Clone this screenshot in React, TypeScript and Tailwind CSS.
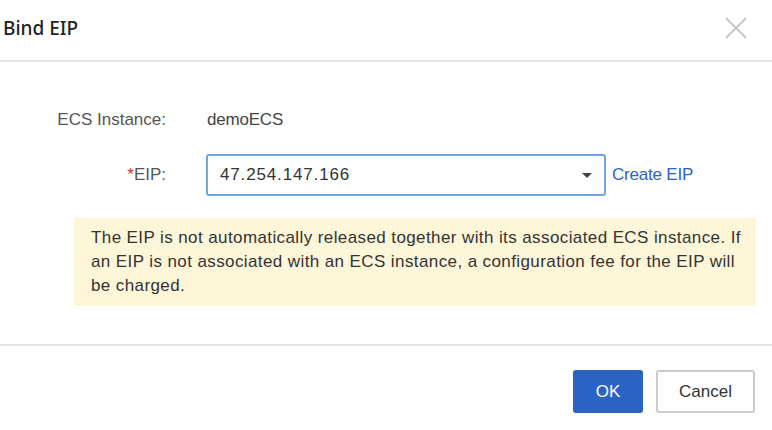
import React from 'react';

function CloseIcon() {
  return (
    <svg width="22" height="22" viewBox="0 0 22 22" fill="none" stroke="#c8c8c8" strokeWidth="2">
      <path d="M1 1 L21 21 M21 1 L1 21" />
    </svg>
  );
}

export default function App() {
  return (
    <div className="w-[772px] h-[430px] bg-white flex flex-col font-['Liberation_Sans',Arial,sans-serif] overflow-hidden">
      {/* header */}
      <div className="h-[62px] shrink-0 flex items-center justify-between pl-[3px] pr-[25px] border-b-2 border-[#e6e6e6]">
        <div className="text-[19px] font-medium text-[#222] font-['Noto_Sans',sans-serif] pb-[4px]">Bind EIP</div>
        <div className="pb-[5px]">
          <CloseIcon />
        </div>
      </div>

      {/* body */}
      <div className="h-[282px] shrink-0 pt-[46px] pl-[57px] pr-[16px]">
        <div className="flex items-center h-[24px]">
          <div className="w-[109px] text-right text-[17px] text-[#555] whitespace-nowrap">ECS Instance:</div>
          <div className="ml-[41px] text-[17px] tracking-[-0.2px] text-[#444]">demoECS</div>
        </div>

        <div className="flex items-center mt-[22px] h-[42px]">
          <div className="w-[109px] text-right text-[17px] text-[#555]">
            <span className="text-[#d93026]">*</span>EIP:
          </div>
          <div className="ml-[40px] w-[400px] h-[42px] border-2 border-[#6ea5e3] rounded-[3px] flex items-center justify-between pl-[12px] pr-[12px]">
            <span className="text-[17px] text-[#333] tracking-[0.85px]">47.254.147.166</span>
            <span className="w-0 h-0 border-l-[5px] border-r-[5px] border-t-[5px] border-l-transparent border-r-transparent border-t-[#444]" />
          </div>
          <a className="ml-[6px] text-[17px] tracking-[-0.2px] text-[#2d62c2] cursor-pointer">Create EIP</a>
        </div>

        <div className="mt-[22px] ml-[17px] w-[682px] h-[88px] bg-[#fdf6d8] pl-[17px] pt-[8px] text-[17px] tracking-[0.4px] leading-[24px] text-[#333] whitespace-nowrap">
          The EIP is not automatically released together with its associated ECS instance. If
          <br />
          an EIP is not associated with an ECS instance, a configuration fee for the EIP will
          <br />
          be charged.
        </div>
      </div>

      {/* footer */}
      <div className="flex-1 border-t-2 border-[#e6e6e6] flex justify-end items-start pt-[24px] pr-[17px] gap-[13px]">
        <button className="w-[70px] h-[43px] rounded-[3px] bg-[#2b62c3] text-white text-[17px]">OK</button>
        <button className="w-[99px] h-[43px] rounded-[3px] border-2 border-[#c9cbce] bg-white text-[#333] text-[17px]">Cancel</button>
      </div>
    </div>
  );
}
